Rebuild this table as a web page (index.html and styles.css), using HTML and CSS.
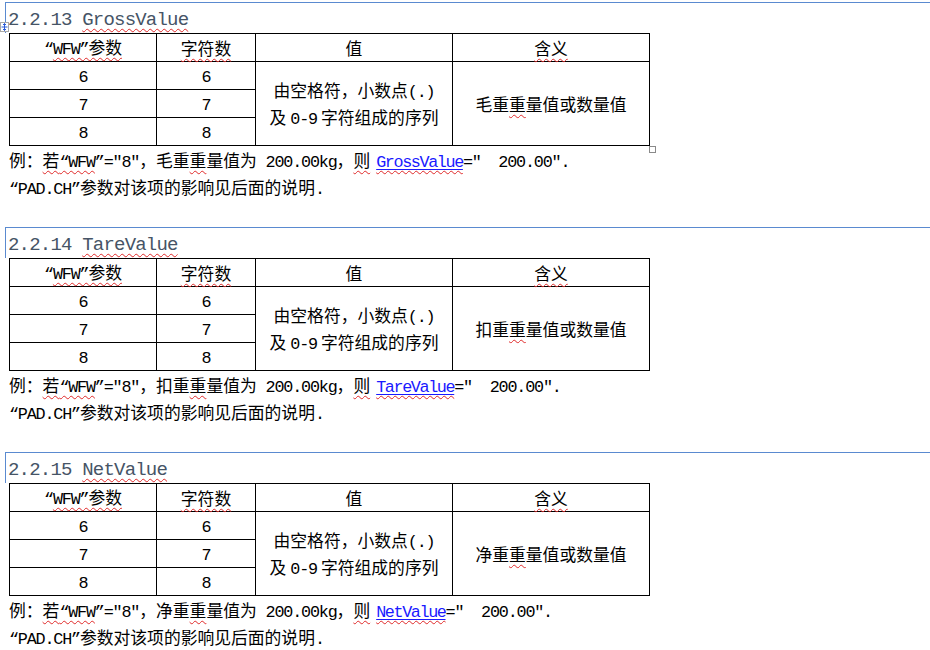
FILE: index.html
```html
<!DOCTYPE html>
<html lang="zh-CN">
<head>
<meta charset="utf-8">
<title>GrossValue / TareValue / NetValue</title>
<link rel="stylesheet" href="styles.css">
</head>
<body>
<div class="doc">

  <section class="sec">
    <span class="move-handle"><svg width="9" height="10" viewBox="0 0 9 10"><rect x="0.5" y="0.5" width="8" height="9" fill="#fff" stroke="#a8a8a8"/><path d="M4.5 1.5v7M1.5 5h6" stroke="#2a5bd7" stroke-width="1"/><path d="M3 3l1.5-1.5L6 3M3 7l1.5 1.5L6 7" fill="none" stroke="#2a5bd7" stroke-width="1"/></svg></span>
    <h2 class="head">2.2.13 <span class="sq">GrossValue</span></h2>
    <div class="tbl-wrap">
      <table class="tbl">
        <colgroup><col class="c1"><col class="c2"><col class="c3"><col class="c4"></colgroup>
        <tr><td><span class="l">“</span><span class="sq"><span class="l">WFW”</span>参数</span></td><td><span class="sq">字符数</span></td><td>值</td><td><span class="sq">含义</span></td></tr>
        <tr><td><span class="l">6</span></td><td><span class="l">6</span></td>
          <td rowspan="3" class="multi">由空格符，小数点<span class="l">(.)</span><br>及<span class="l sp">0-9</span>字符组成的序列</td>
          <td rowspan="3">毛重<span class="sq">重</span>量值或数量值</td></tr>
        <tr><td><span class="l">7</span></td><td><span class="l">7</span></td></tr>
        <tr><td><span class="l">8</span></td><td><span class="l">8</span></td></tr>
      </table>
      <span class="resize-handle"></span>
    </div>
    <div class="txt">
      <div class="line">例：<span class="sq">若<span class="l">“WFW</span></span><span class="l">”="8"</span>，毛重<span class="sq">重</span>量值为<span class="l"> 200.00kg</span>，<span class="sq">则<span class="link">GrossValue</span></span><span class="l">="  200.00".</span></div>
      <div class="line"><span class="l">“PAD.CH”</span>参数对该项的影响见后面的说明<span class="l">.</span></div>
    </div>
  </section>

  <section class="sec">
    <h2 class="head">2.2.14 <span class="sq">TareValue</span></h2>
    <div class="tbl-wrap">
      <table class="tbl">
        <colgroup><col class="c1"><col class="c2"><col class="c3"><col class="c4"></colgroup>
        <tr><td><span class="l">“</span><span class="sq"><span class="l">WFW”</span>参数</span></td><td><span class="sq">字符数</span></td><td>值</td><td><span class="sq">含义</span></td></tr>
        <tr><td><span class="l">6</span></td><td><span class="l">6</span></td>
          <td rowspan="3" class="multi">由空格符，小数点<span class="l">(.)</span><br>及<span class="l sp">0-9</span>字符组成的序列</td>
          <td rowspan="3">扣重<span class="sq">重</span>量值或数量值</td></tr>
        <tr><td><span class="l">7</span></td><td><span class="l">7</span></td></tr>
        <tr><td><span class="l">8</span></td><td><span class="l">8</span></td></tr>
      </table>
    </div>
    <div class="txt">
      <div class="line">例：<span class="sq">若<span class="l">“WFW</span></span><span class="l">”="8"</span>，扣重<span class="sq">重</span>量值为<span class="l"> 200.00kg</span>，<span class="sq">则<span class="link">TareValue</span></span><span class="l">="  200.00".</span></div>
      <div class="line"><span class="l">“PAD.CH”</span>参数对该项的影响见后面的说明<span class="l">.</span></div>
    </div>
  </section>

  <section class="sec">
    <h2 class="head">2.2.15 <span class="sq">NetValue</span></h2>
    <div class="tbl-wrap">
      <table class="tbl">
        <colgroup><col class="c1"><col class="c2"><col class="c3"><col class="c4"></colgroup>
        <tr><td><span class="l">“</span><span class="sq"><span class="l">WFW”</span>参数</span></td><td><span class="sq">字符数</span></td><td>值</td><td><span class="sq">含义</span></td></tr>
        <tr><td><span class="l">6</span></td><td><span class="l">6</span></td>
          <td rowspan="3" class="multi">由空格符，小数点<span class="l">(.)</span><br>及<span class="l sp">0-9</span>字符组成的序列</td>
          <td rowspan="3">净重<span class="sq">重</span>量值或数量值</td></tr>
        <tr><td><span class="l">7</span></td><td><span class="l">7</span></td></tr>
        <tr><td><span class="l">8</span></td><td><span class="l">8</span></td></tr>
      </table>
    </div>
    <div class="txt">
      <div class="line">例：<span class="sq">若<span class="l">“WFW</span></span><span class="l">”="8"</span>，净重<span class="sq">重</span>量值为<span class="l"> 200.00kg</span>，<span class="sq">则<span class="link">NetValue</span></span><span class="l">="  200.00".</span></div>
      <div class="line"><span class="l">“PAD.CH”</span>参数对该项的影响见后面的说明<span class="l">.</span></div>
    </div>
  </section>

</div>
</body>
</html>
```

FILE: styles.css
```css
html, body {
  margin: 0;
  padding: 0;
  background: #ffffff;
}

body {
  font-family: "Noto Sans CJK SC", "Liberation Sans", sans-serif;
  font-size: 16.8px;
  color: #000;
  overflow: hidden;
}

.doc {
  padding-top: 2px;
}

.sec {
  position: relative;
  height: 225px;
}

.head {
  margin: 0 0 0 5px;
  height: 25px;
  padding: 5px 0 0 2px;
  border-top: 1px solid #5a8ad0;
  border-left: 1px solid #5a8ad0;
  font-family: "Liberation Mono", monospace;
  font-weight: normal;
  font-size: 19px;
  letter-spacing: -0.8px;
  line-height: 25px;
  color: #465466;
  white-space: pre;
  overflow: hidden;
}

.sq {
  text-decoration: underline wavy #e02a2a;
  text-decoration-thickness: 1px;
  text-underline-offset: 3px;
  text-decoration-skip-ink: none;
}

.tbl-wrap {
  position: relative;
  margin-left: 9px;
  width: 641px;
  height: 113px;
}

.tbl {
  border-collapse: collapse;
  table-layout: fixed;
  width: 641px;
}

.c1 { width: 147px; }
.c2 { width: 99px; }
.c3 { width: 197px; }
.c4 { width: 197px; }

.tbl td {
  border: 1px solid #000;
  height: 27px;
  padding: 0;
  text-align: center;
  vertical-align: middle;
  line-height: 20px;
  white-space: nowrap;
}

.tbl td.multi {
  line-height: 27px;
}

.l {
  font-family: "Liberation Mono", monospace;
  letter-spacing: -1.2px;
  line-height: 1;
}

.sp {
  margin: 0 4px;
}

.link {
  font-family: "Liberation Mono", monospace;
  letter-spacing: -1.4px;
  line-height: 1;
  color: #1a1aff;
  text-decoration: underline;
  text-underline-offset: 2px;
  margin-left: 6px;
}

.txt {
  margin-top: 1px;
  padding-left: 9px;
}

.line {
  height: 27px;
  line-height: 27px;
  white-space: pre;
  overflow: visible;
}

.move-handle {
  position: absolute;
  left: 0;
  top: 20px;
  width: 9px;
  height: 10px;
  line-height: 0;
}

.resize-handle {
  position: absolute;
  left: 640px;
  top: 113px;
  width: 5px;
  height: 5px;
  border: 1px solid #8a8a8a;
  background: #fff;
}
```
